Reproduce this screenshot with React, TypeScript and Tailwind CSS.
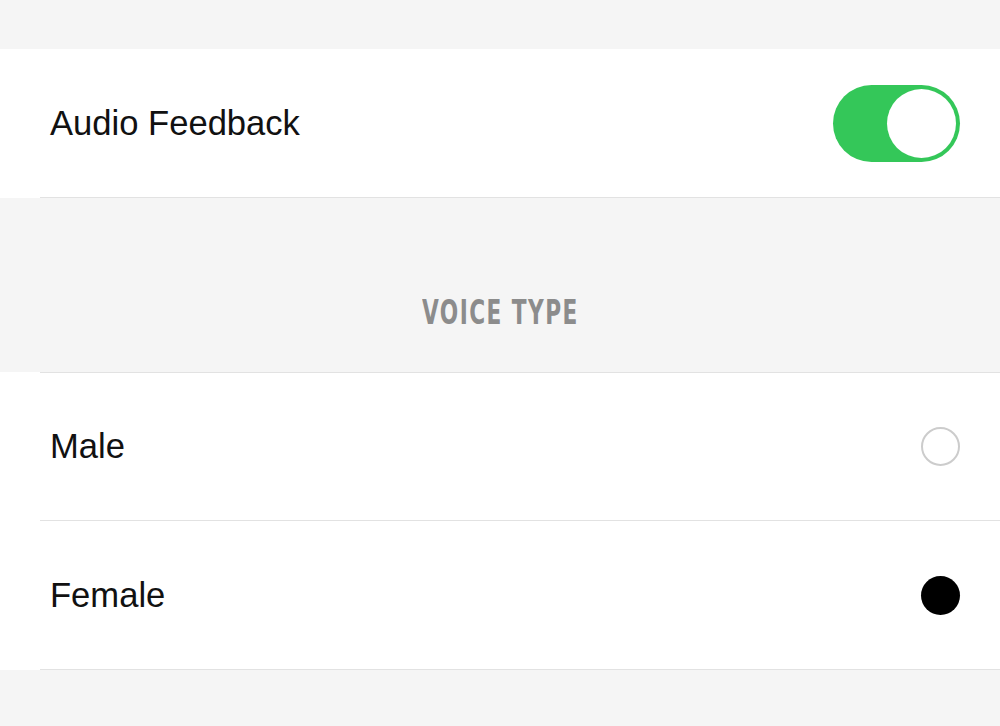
import React from "react";

export default function App() {
  return (
    <div className="w-[1000px] h-[726px] bg-[#f5f5f5] overflow-hidden" style={{ fontFamily: '"Liberation Sans", Arial, sans-serif' }}>
      <div className="h-[49px]" />
      <div className="bg-white pl-[40px]">
        <div className="h-[149px] border-b border-[#e2e2e2] flex items-center justify-between pl-[10px] pr-[40px]">
          <span className="text-[34.6px] text-[#111] leading-none">Audio Feedback</span>
          <div className="w-[127px] h-[77px] rounded-full bg-[#34c759] p-[4px] flex justify-end">
            <div className="w-[69px] h-[69px] rounded-full bg-white" />
          </div>
        </div>
      </div>
      <div className="h-[174px] flex justify-center pt-[98px]">
        <span
          className="text-[33px] font-bold text-[#8c8c8c] leading-none tracking-[2px] inline-block scale-x-[0.73]"
          style={{ fontFamily: '"Liberation Sans Narrow", "DejaVu Sans Condensed", "Liberation Sans", sans-serif' }}
        >
          VOICE TYPE
        </span>
      </div>
      <div className="bg-white pl-[40px]">
        <div className="h-[149px] border-t border-b border-[#e2e2e2] flex items-center justify-between pl-[10px] pr-[40px]">
          <span className="text-[34.6px] text-[#111] leading-none">Male</span>
          <div className="w-[39px] h-[39px] rounded-full border-2 border-[#cccccc]" />
        </div>
        <div className="h-[149px] border-b border-[#e2e2e2] flex items-center justify-between pl-[10px] pr-[40px]">
          <span className="text-[34.6px] text-[#111] leading-none">Female</span>
          <div className="w-[39px] h-[39px] rounded-full bg-black" />
        </div>
      </div>
    </div>
  );
}
